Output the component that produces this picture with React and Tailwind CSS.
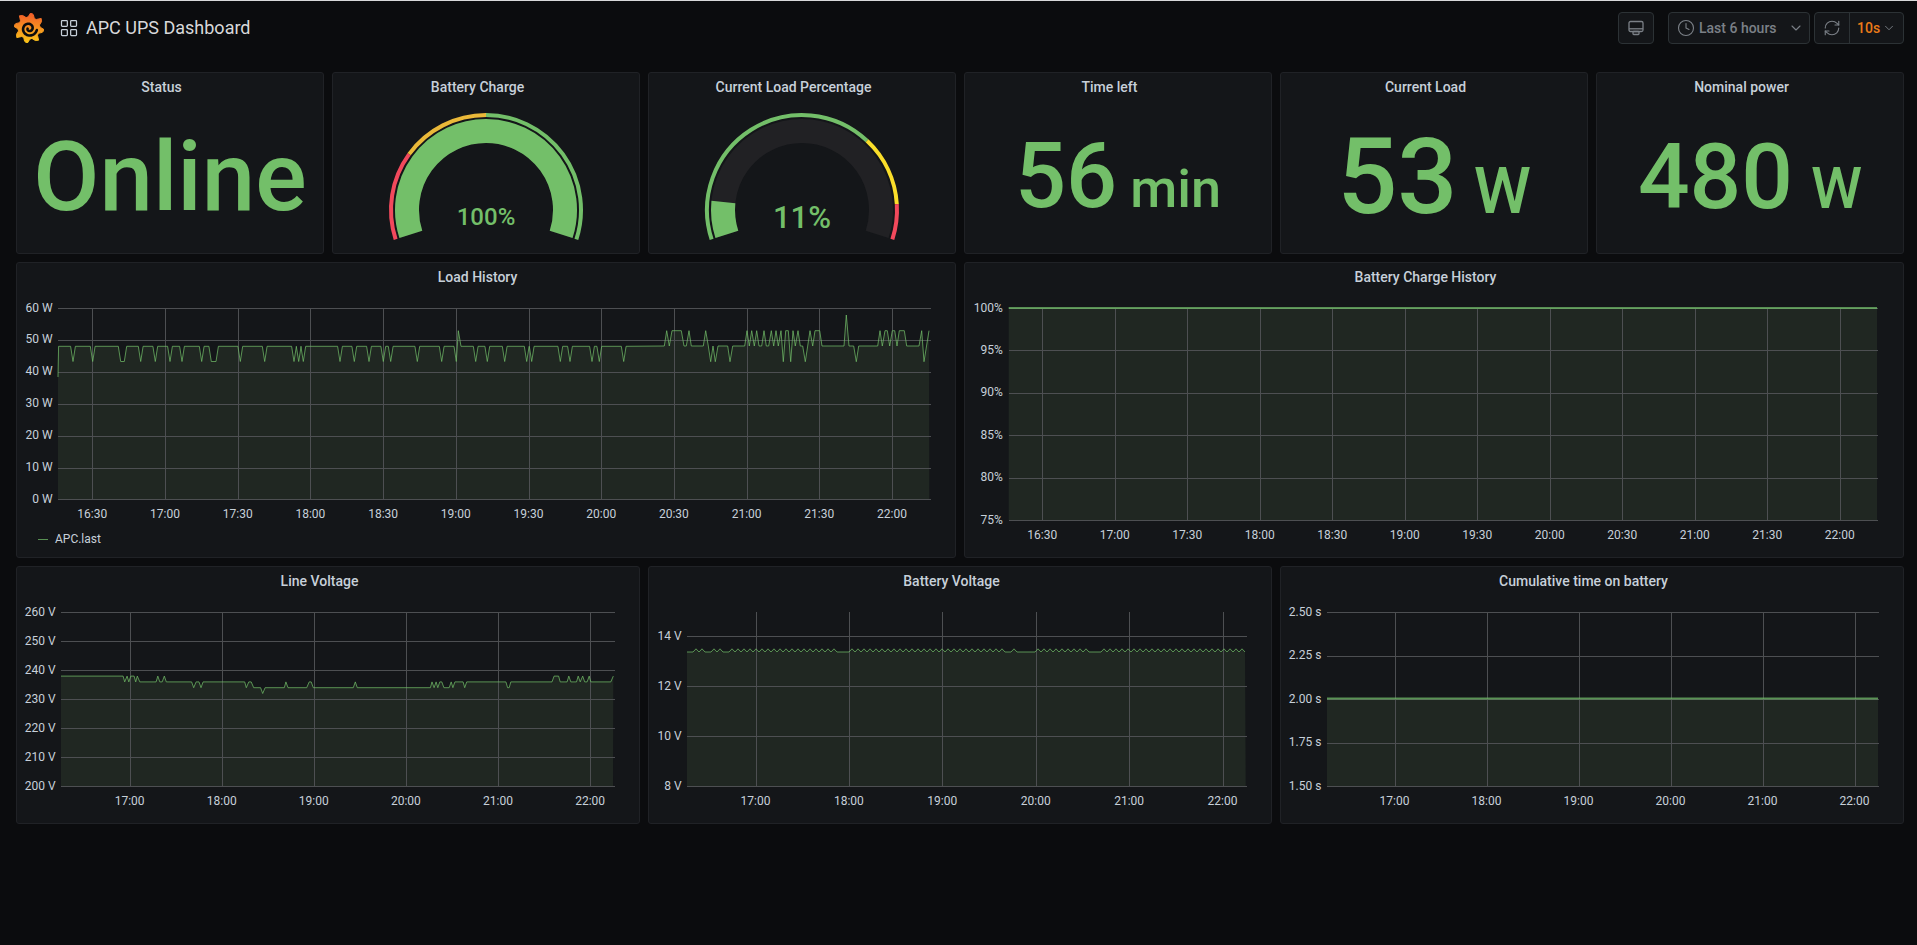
import React from "react";
import { Clock, ChevronDown, RefreshCw, LayoutGrid } from "lucide-react";

const GREEN = "#73BF69";

// ---- gauge helpers ----
const polar = (cx, cy, r, f) => {
  const a = ((162 + 216 * f) * Math.PI) / 180;
  return [cx + r * Math.cos(a), cy + r * Math.sin(a)];
};
const arc = (cx, cy, r, f0, f1) => {
  const [x0, y0] = polar(cx, cy, r, f0);
  const [x1, y1] = polar(cx, cy, r, f1);
  const large = (f1 - f0) * 216 > 180 ? 1 : 0;
  return `M${x0} ${y0}A${r} ${r} 0 ${large} 1 ${x1} ${y1}`;
};

// ---- load history series ----
const H = 346.3;
const LOW = 361.5;
const HIGH = 330.7;
const loadLeft = () => {
  const pts = [[58, 377], [58.6, H]];
  const z4 = (x) => 10 + x / 3;
  const z5 = (x) => 480 + x / 3;
  const dips = [189, 248, [332, 343], 392, 436, 480, 516, 575, [604, 618], 691, 764, 852, 866, 880, 990, 1033, 1077, 1120, 1142, 1222, 1295].map((d) =>
    Array.isArray(d) ? d.map(z4) : z4(d)
  );
  dips.forEach((d) => {
    if (Array.isArray(d)) pts.push([d[0] - 2.4, H], [d[0], LOW], [d[1], LOW], [d[1] + 2.4, H]);
    else pts.push([d - 2.4, H], [d, LOW], [d + 2.4, H]);
  });
  pts.push([z4(1332), H], [z4(1339), LOW], [z4(1345), HIGH], [z4(1353), H]);
  [z4(1397), z5(22), z5(74), z5(140), z5(155), z5(241), z5(270), z5(336), z5(358), z5(431)].forEach((d) => {
    pts.push([d - 2.4, H], [d, LOW], [d + 2.4, H]);
  });
  return pts;
};
const loadRight = [
  [13, 108], [20, 62], [28, 108], [36, 62], [64, 62], [72, 108], [79, 108], [87, 62], [94, 108], [130, 108], [137, 62], [145, 108], [152, 155], [159, 108], [166, 155], [174, 108], [203, 108], [210, 155], [218, 108], [254, 108], [261, 62], [268, 108], [275, 62], [283, 108], [290, 62], [297, 108], [305, 108], [312, 62], [319, 108], [326, 108], [334, 62], [341, 108], [348, 62], [355, 108], [363, 62], [370, 155], [377, 62], [385, 62], [392, 155], [399, 62], [406, 108], [414, 62], [421, 108], [428, 108], [436, 155], [443, 108], [450, 62], [458, 108], [465, 62], [479, 62], [486, 108], [552, 108], [559, 15], [567, 108], [581, 108], [589, 155], [596, 108], [653, 108], [660, 62], [667, 108], [675, 62], [682, 62], [689, 108], [697, 62], [704, 62], [711, 108], [718, 62], [733, 62], [740, 108], [777, 108], [785, 62], [792, 155], [807, 62],
].map(([x, y]) => [660 + x / 3, 310 + y / 3]);
const loadSeries = [...loadLeft(), ...loadRight];

// ---- line voltage series ----
const lineRaw = [
  [125, 238], [277, 238], [281, 236], [287, 238], [291, 236], [296, 238], [304, 238], [308, 236], [312, 238], [318, 236], [358, 236], [362, 238], [367, 236], [373, 236], [378, 238], [383, 236], [445, 236], [450, 234], [456, 236], [463, 236], [468, 234], [473, 236], [575, 236], [579, 234], [585, 236], [591, 236], [597, 234], [614, 234], [619, 232], [625, 234], [672, 234], [676, 236], [681, 234], [727, 234], [733, 236], [738, 236], [743, 234], [841, 234], [846, 236], [851, 234], [1030, 234], [1034, 236], [1039, 234], [1044, 236], [1048, 234], [1053, 236], [1058, 236], [1063, 234], [1076, 234], [1081, 236], [1085, 234], [1090, 236], [1110, 236], [1114, 234], [1119, 236], [1215, 236], [1219, 234], [1223, 234], [1227, 236], [1328, 236], [1333, 238], [1344, 238], [1348, 236], [1365, 236], [1369, 238], [1374, 236], [1388, 236], [1392, 238], [1397, 236], [1403, 238], [1408, 236], [1414, 236], [1419, 238], [1423, 236], [1472, 236], [1478, 238],
];
const lineSeries = lineRaw.map(([x, v]) => [x / 2.45 + 10, 786.3 - (v - 200) * 2.9]);

// ---- battery voltage series ----
const batterySeries = (() => {
  const pts = [];
  const flats = [[687, 692], [705, 709], [725, 731], [838, 851], [1003, 1011], [1020, 1032], [1090, 1100]];
  let x = 687;
  let up = false;
  while (x < 1245.7) {
    const flat = flats.some(([a, b]) => x >= a && x <= b);
    pts.push([x, up && !flat ? 648.8 : 652]);
    up = !up;
    x += 3;
  }
  return pts;
})();

const toPoints = (s) => s.map(([x, y]) => `${x.toFixed(1)},${y.toFixed(1)}`).join(" ");

function Panel({ title, children }) {
  return (
    <div className="flex flex-col min-w-0 rounded-[3px] border border-[#202226] bg-[#141619]">
      <div className="h-[29px] shrink-0 pr-[17px] text-center text-sm font-medium leading-[29px] text-[#c7d0d9]">{title}</div>
      {children}
    </div>
  );
}

function Stat({ title, value, unit, valueClass, unitClass }) {
  return (
    <Panel title={title}>
      <div className="flex flex-1 items-center justify-center pb-px">
        <div className="flex items-baseline whitespace-nowrap font-medium text-[#73BF69]">
          <span className={valueClass}>{value}</span>
          {unit && <span className={unitClass}>{unit}</span>}
        </div>
      </div>
    </Panel>
  );
}

function Gauge({ title, value, label, labelClass, bands }) {
  const cx = 153;
  const cy = 108;
  return (
    <Panel title={title}>
      <svg width="306" height="150" className="block">
        <path d={arc(cx, cy, 79, 0, 1)} fill="none" stroke="#212124" strokeWidth="24" />
        <path d={arc(cx, cy, 79, 0, value)} fill="none" stroke={GREEN} strokeWidth="24" />
        {bands.map(([a, b, c]) => (
          <path key={c} d={arc(cx, cy, 95, a, b)} fill="none" stroke={c} strokeWidth="4" />
        ))}
        <text x={cx} y={cy + 7} textAnchor="middle" dominantBaseline="central" fill={GREEN} className={labelClass}>
          {label}
        </text>
      </svg>
    </Panel>
  );
}

function Graph({ panelX, panelY, panelW, panelH, left, right, fillEnd, top, bottom, hTicks, vTicks, labelRight, labelY, series, thick, children }) {
  const w = panelW - 2;
  const h = panelH - 31;
  const ox = panelX + 1;
  const oy = panelY + 30;
  const area = `${toPoints(series)} ${fillEnd},${bottom} ${left},${bottom}`;
  return (
    <svg width={w} height={h} viewBox={`${ox} ${oy} ${w} ${h}`} className="block text-xs">
      <polygon points={area} fill="#202722" />
      {hTicks.map(([t, y]) => (
        <g key={t}>
          <line x1={left} x2={right} y1={Math.round(y) + 0.5} y2={Math.round(y) + 0.5} stroke="#4d4f52" shapeRendering="crispEdges" />
          <text x={labelRight} y={y - 0.5} textAnchor="end" dominantBaseline="central" fill="#c7d0d9">
            {t}
          </text>
        </g>
      ))}
      {vTicks.map(([t, x]) => (
        <g key={t}>
          <line x1={Math.round(x) + 0.5} x2={Math.round(x) + 0.5} y1={top} y2={bottom} stroke="#4d4f52" shapeRendering="crispEdges" />
          <text x={x} y={labelY} textAnchor="middle" dominantBaseline="central" fill="#c7d0d9">
            {t}
          </text>
        </g>
      ))}
      <polyline points={toPoints(series)} fill="none" stroke={GREEN} strokeOpacity="0.72" strokeWidth={thick ? 2 : 1} />
      {children}
    </svg>
  );
}

const halfHours = ["16:30", "17:00", "17:30", "18:00", "18:30", "19:00", "19:30", "20:00", "20:30", "21:00", "21:30", "22:00"];
const hours = ["17:00", "18:00", "19:00", "20:00", "21:00", "22:00"];

function GrafanaLogo() {
  const lobes = 8;
  const outline = [];
  for (let i = 0; i < lobes * 4; i++) {
    const a = (i / (lobes * 4)) * Math.PI * 2 - Math.PI / 2 + 0.12;
    const r = [15.5, 14, 10.8, 11.2][i % 4];
    outline.push(`${(16 + r * Math.cos(a)).toFixed(2)},${(16 + r * Math.sin(a)).toFixed(2)}`);
  }
  const spiral = [];
  for (let i = 0; i <= 60; i++) {
    const t = i / 60;
    const a = 0.2 + t * Math.PI * 2.9;
    const r = 8 - t * 6.6;
    spiral.push(`${(16 + r * Math.cos(a)).toFixed(2)},${(16.5 + r * Math.sin(a)).toFixed(2)}`);
  }
  return (
    <svg width="30" height="30" viewBox="1 1 30 30" className="block">
      <defs>
        <linearGradient id="grafanaFill" x1="0" y1="1" x2="0" y2="0">
          <stop offset="0" stopColor="#fbc817" />
          <stop offset="1" stopColor="#f15a2a" />
        </linearGradient>
      </defs>
      <polygon points={outline.join(" ")} fill="url(#grafanaFill)" stroke="url(#grafanaFill)" strokeLinejoin="round" />
      <polyline points={spiral.join(" ")} fill="none" stroke="#0b0c0e" strokeWidth="2.6" strokeLinecap="round" />
    </svg>
  );
}

function MonitorIcon() {
  return (
    <svg width="16" height="16" viewBox="0 0 16 16" fill="none" stroke="#7b8087" strokeWidth="1.3">
      <rect x="1" y="1.5" width="14" height="10" rx="1.5" />
      <line x1="1" y1="8.8" x2="15" y2="8.8" />
      <rect x="5" y="11.5" width="6" height="3" rx="0.8" />
    </svg>
  );
}

export default function App() {
  return (
    <div className="min-h-screen bg-[#0b0c0e] font-['Roboto',sans-serif] text-[#c7d0d9]">
      <div className="h-px bg-[#d8d9da]" />
      {/* Top bar */}
      <div className="flex h-[71px] pl-[14px] pr-[13px]">
        <div className="mt-[12px] flex h-[30px] items-center">
          <GrafanaLogo />
          <LayoutGrid className="ml-[15px] h-5 w-5 text-[#c7d0d9]" strokeWidth={1.5} />
          <span className="ml-[7px] text-lg text-[#d8d9da]">APC UPS Dashboard</span>
        </div>
        <div className="ml-auto mt-[11px] flex h-8">
          <div className="flex w-9 items-center justify-center rounded-sm border border-[#2c3235] bg-[#141619]">
            <MonitorIcon />
          </div>
          <div className="ml-[14px] flex w-[142px] items-center rounded-sm border border-[#2c3235] bg-[#141619] pl-2 text-sm font-medium text-[#7b8087]">
            <Clock className="h-[18px] w-[18px]" strokeWidth={1.5} />
            <span className="ml-1">Last 6 hours</span>
            <ChevronDown className="ml-auto mr-[5px] h-4 w-4" strokeWidth={1.6} />
          </div>
          <div className="ml-1 flex w-[90px] rounded-sm border border-[#2c3235] bg-[#141619]">
            <div className="flex w-[35px] items-center justify-center border-r border-[#2c3235]">
              <RefreshCw className="h-[18px] w-[18px] text-[#7b8087]" strokeWidth={1.5} />
            </div>
            <div className="flex flex-1 items-center pl-[7px] text-sm font-medium text-[#eb7b18]">
              10s
              <ChevronDown className="ml-0.5 h-[14px] w-[14px] text-[#7b8087]" strokeWidth={1.6} />
            </div>
          </div>
        </div>
      </div>

      <div className="flex flex-col gap-2 pl-4 pr-[13px]">
        {/* Row 1 */}
        <div className="grid h-[182px] grid-cols-6 gap-2">
          <Stat title="Status" value="Online" valueClass="text-[96px] leading-none" />
          <Gauge
            title="Battery Charge"
            value={1}
            label="100%"
            labelClass="text-2xl font-medium"
            bands={[
              [0, 0.25, "#F2495C"],
              [0.25, 0.5, "#EAB839"],
              [0.5, 1, GREEN],
            ]}
          />
          <Gauge
            title="Current Load Percentage"
            value={0.11}
            label="11%"
            labelClass="text-[31px] font-medium"
            bands={[
              [0, 0.7, GREEN],
              [0.7, 0.9, "#FADE2A"],
              [0.9, 1, "#F2495C"],
            ]}
          />
          <Stat title="Time left" value="56" unit="min" valueClass="text-[90px] leading-none" unitClass="ml-[13px] text-[54px] leading-none" />
          <Stat title="Current Load" value="53" unit="W" valueClass="text-[106px] leading-none" unitClass="ml-[16px] text-[65px] leading-none" />
          <Stat title="Nominal power" value="480" unit="W" valueClass="text-[91px] leading-none" unitClass="ml-[18px] text-[58px] leading-none" />
        </div>

        {/* Row 2 */}
        <div className="grid h-[296px] grid-cols-2 gap-2">
          <Panel title="Load History">
            <Graph
              panelX={16}
              panelY={262}
              panelW={940}
              panelH={296}
              left={58}
              right={931}
              fillEnd={929.3}
              top={308}
              bottom={499.3}
              labelRight={52.7}
              labelY={513.7}
              series={loadSeries}
              hTicks={["60 W", "50 W", "40 W", "30 W", "20 W", "10 W", "0 W"].map((t, i) => [t, 308 + i * 31.9])}
              vTicks={halfHours.map((t, i) => [t, 92.3 + i * 72.7])}
            >
              <line x1="38" x2="48" y1="539.5" y2="539.5" stroke={GREEN} strokeOpacity="0.72" />
              <text x="55" y="538.7" dominantBaseline="central" fill="#c7d0d9">
                APC.last
              </text>
            </Graph>
          </Panel>
          <Panel title="Battery Charge History">
            <Graph
              panelX={964}
              panelY={262}
              panelW={940}
              panelH={296}
              left={1008.7}
              right={1878}
              fillEnd={1877}
              top={308}
              bottom={520.3}
              labelRight={1002.7}
              labelY={535}
              thick
              series={[
                [1008.7, 308],
                [1877, 308],
              ]}
              hTicks={["100%", "95%", "90%", "85%", "80%", "75%"].map((t, i) => [t, 308 + i * 42.46])}
              vTicks={halfHours.map((t, i) => [t, 1042.3 + i * 72.5])}
            />
          </Panel>
        </div>

        {/* Row 3 */}
        <div className="grid h-[258px] grid-cols-3 gap-2">
          <Panel title="Line Voltage">
            <Graph
              panelX={16}
              panelY={566}
              panelW={624}
              panelH={258}
              left={61}
              right={614.5}
              fillEnd={613}
              top={612.3}
              bottom={786.3}
              labelRight={55.7}
              labelY={800.7}
              series={lineSeries}
              hTicks={["260 V", "250 V", "240 V", "230 V", "220 V", "210 V", "200 V"].map((t, i) => [t, 612.3 + i * 29])}
              vTicks={hours.map((t, i) => [t, 129.6 + i * 92.1])}
            />
          </Panel>
          <Panel title="Battery Voltage">
            <Graph
              panelX={648}
              panelY={566}
              panelW={624}
              panelH={258}
              left={687}
              right={1247}
              fillEnd={1245.7}
              top={612.3}
              bottom={786.3}
              labelRight={681.6}
              labelY={800.7}
              series={batterySeries}
              hTicks={[
                ["14 V", 636.3],
                ["12 V", 686.3],
                ["10 V", 736.3],
                ["8 V", 786.3],
              ]}
              vTicks={hours.map((t, i) => [t, 755.5 + i * 93.4])}
            />
          </Panel>
          <Panel title="Cumulative time on battery">
            <Graph
              panelX={1280}
              panelY={566}
              panelW={624}
              panelH={258}
              left={1327}
              right={1879}
              fillEnd={1878}
              top={612.3}
              bottom={786.3}
              labelRight={1321.4}
              labelY={800.7}
              thick
              series={[
                [1327, 698.6],
                [1878, 698.6],
              ]}
              hTicks={["2.50 s", "2.25 s", "2.00 s", "1.75 s", "1.50 s"].map((t, i) => [t, 612.3 + i * 43.5])}
              vTicks={hours.map((t, i) => [t, 1394.5 + i * 92])}
            />
          </Panel>
        </div>
      </div>
    </div>
  );
}
